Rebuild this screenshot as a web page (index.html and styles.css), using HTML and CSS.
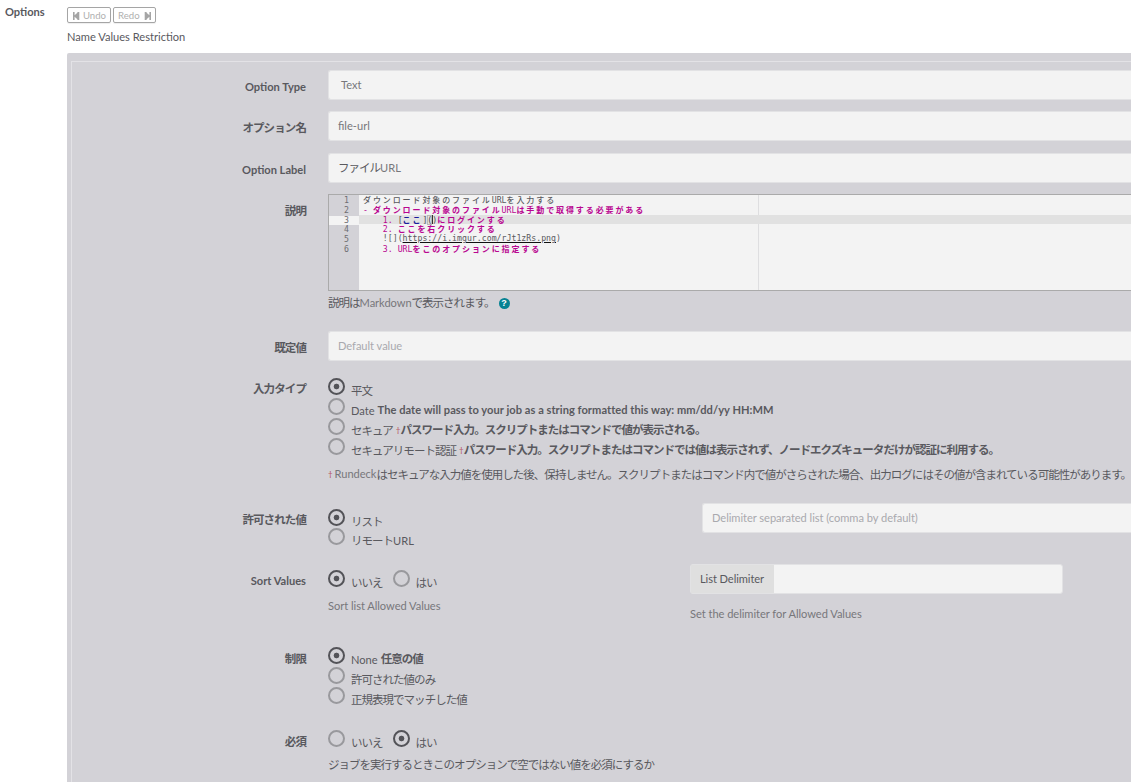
FILE: index.html
```html
<!DOCTYPE html>
<html lang="ja">
<head>
<meta charset="utf-8">
<title>Options</title>
<link rel="stylesheet" href="styles.css">
</head>
<body>
<div class="page">
  <div class="section-label">Options</div>
  <main class="section-body">
    <div class="toolbar">
      <button class="btn"><svg width="7" height="8" viewBox="0 0 7 8"><path d="M0 0h1.600v3.200L4.400 .800V0H6.300v8H4.400V7.200L1.600 4.800V8H0z"/></svg><span>Undo</span></button>
      <button class="btn redo"><span>Redo</span><svg width="7" height="8" viewBox="0 0 7 8"><path d="M7 0H5.400v3.200L2.600 .800V0H.700v8H2.600V7.200L5.400 4.800V8H7z"/></svg></button>
    </div>
    <div class="summary">Name Values Restriction</div>
    <div class="panel"><form class="option-form">
      <div class="row h41"><label class="label">Option Type</label><div class="input select">Text</div></div>
      <div class="row h42"><label class="label ja">オプション名</label><div class="input">file-url</div></div>
      <div class="row h41"><label class="label">Option Label</label><div class="input"><span class="ja">ファイル</span>URL</div></div>
      <div class="row h137"><label class="label ja">説明</label>
        <div>
          <div class="editor">
            <div class="gutter"><div>1</div><div>2</div><div class="active">3</div><div>4</div><div>5</div><div>6</div></div>
            <div class="code">
              <div><b class="j">ダウンロード対象のファイル</b>URL<b class="j">を入力する</b></div>
              <div class="list">- <b class="j">ダウンロード対象のファイル</b>URL<b class="j">は手動で取得する必要がある</b></div>
              <div class="list active">    1. <i>[</i><b class="j link">ここ</b><i>]<span class="bracket">(</span><span class="cursor"></span><span>)</span></i><b class="j">にログインする</b></div>
              <div class="list">    2. <b class="j">ここを右クリックする</b></div>
              <div>    ![](<u>https://i.imgur.com/rJt1zRs.png</u>)</div>
              <div class="list">    3. URL<b class="j">をこのオプションに指定する</b></div>
            </div>
          </div>
          <div class="help editor-help"><span class="ja">説明は</span><span>Markdown</span><span class="ja">で表示されます。</span><span class="question">?</span></div>
        </div>
      </div>
      <div class="row h47"><label class="label ja">既定値</label><div class="input placeholder">Default value</div></div>
      <div class="row h125"><label class="label ja raised">入力タイプ</label>
        <div>
          <div class="radio on"><i></i><span class="ja">平文</span></div>
          <div class="radio"><i></i><span>Date</span><strong class="date">The date will pass to your job as a string formatted this way: mm/dd/yy HH:MM</strong></div>
          <div class="radio"><i></i><span class="ja">セキュア</span><sup>†</sup><strong class="ja">パスワード入力。スクリプトまたはコマンドで値が表示される。</strong></div>
          <div class="radio"><i></i><span class="ja">セキュアリモート認証</span><sup>†</sup><strong class="ja">パスワード入力。スクリプトまたはコマンドでは値は表示されず、ノードエクズキュータだけが認証に利用する。</strong></div>
          <div class="help security"><sup>†</sup><span>Rundeck</span><span class="ja">はセキュアな入力値を使用した後、保持しません。スクリプトまたはコマンド内で値がさらされた場合、出力ログにはその値が含まれている可能性があります。</span></div>
        </div>
      </div>
      <div class="row h61"><label class="label ja">許可された値</label>
        <div class="split allowed">
          <div class="choices"><div class="radio on"><i></i><span class="ja">リスト</span></div><div class="radio"><i></i><span class="ja">リモート</span><span>URL</span></div></div>
          <div class="input placeholder">Delimiter separated list (comma by default)</div>
        </div>
      </div>
      <div class="row h84"><label class="label">Sort Values</label>
        <div class="split sort">
          <div><div class="inline"><div class="radio on"><i></i><span class="ja">いいえ</span></div><div class="radio"><i></i><span class="ja">はい</span></div></div><div class="help sort-help">Sort list Allowed Values</div></div>
          <div><div class="group"><span class="addon">List Delimiter</span><span class="field"></span></div><div class="help delim-help">Set the delimiter for Allowed Values</div></div>
        </div>
      </div>
      <div class="row h83"><label class="label ja raised">制限</label>
        <div class="restrictions">
          <div class="radio on"><i></i><span>None</span><strong class="ja">任意の値</strong></div>
          <div class="radio"><i></i><span class="ja">許可された値のみ</span></div>
          <div class="radio"><i></i><span class="ja">正規表現でマッチした値</span></div>
        </div>
      </div>
      <div class="row h60"><label class="label ja raised">必須</label>
        <div><div class="inline required"><div class="radio"><i></i><span class="ja">いいえ</span></div><div class="radio on"><i></i><span class="ja">はい</span></div></div><div class="help required-help ja">ジョブを実行するときこのオプションで空ではない値を必須にするか</div></div>
      </div>
    </form></div>
  </main>
</div>
</body>
</html>
```

FILE: styles.css
```css
* { box-sizing: border-box; }
body { margin: 0; height: 782px; overflow: hidden; background: #fff; color: #59595e; font: 11.1px/16px Lato, "Noto Sans CJK JP", sans-serif; white-space: nowrap; }
.page { display: grid; grid-template-columns: 67px 1fr; height: 782px; overflow: hidden; }
.section-label { padding: 4px 0 0 5px; font-weight: 700; }
.section-body { min-width: 0; padding-top: 7px; }
.toolbar { display: flex; gap: 2px; height: 16px; }
.btn { display: flex; align-items: center; justify-content: space-between; width: 44px; height: 16px; padding: 1px 4px 0 5px; border: 1px solid #a5a5a5; border-radius: 2px; background: #fff; color: #b0b0b0; font: 9.6px/12px Lato, sans-serif; box-shadow: 0 1px 1px #eee; }
.btn.redo { width: 43px; padding: 1px 4px 0; }
.btn svg { flex: none; fill: #a5a5a5; }
.summary { height: 30px; padding-top: 6px; }
.panel { height: 760px; padding: 8px 0 0 4px; background: #d3d2d7; border-radius: 2px 0 0; }
.option-form { height: 752px; padding-top: 8px; border: solid #e3e2e6; border-width: 1px 0 0 1px; }
.row { display: grid; grid-template-columns: 234px minmax(0, 1fr); column-gap: 22px; align-items: start; }
.h41 { height: 41px; } .h42 { height: 42px; } .h47 { height: 47px; } .h60 { height: 60px; } .h61 { height: 61px; }
.h83 { height: 83px; } .h84 { height: 84px; } .h125 { height: 125px; } .h137 { height: 137px; }
.label { padding-top: 9px; text-align: right; font-weight: 700; }
.ja { font-family: "Noto Sans CJK JP", sans-serif; font-size: 11.5px; letter-spacing: -.98px; }
.label.ja { padding-top: 8px; letter-spacing: -.9px; }
.label.raised { padding-top: 2px; }
.input { height: 30px; padding: 6px 9px; border: 1px solid #e2e2e4; border-right: 0; border-radius: 3px 0 0 3px; background: #f3f3f3; color: #77777b; }
.input .ja { display: inline-block; height: 16px; line-height: 14px; vertical-align: top; color: #59595e; }
.select { padding-left: 12px; }
.placeholder { color: #a9a9ae; letter-spacing: -.04px; }
.editor { display: flex; height: 97px; border: 1px solid #aaa; border-right: 0; background: #f3f3f3; font: 8.22px/9.75px "DejaVu Sans Mono", monospace; }
.gutter { width: 30px; padding-top: 1px; background: #d3d2d7; color: #6d6d72; }
.gutter div { height: 9.75px; padding-right: 10px; text-align: right; }
.gutter .active { background: #f3f3f3; }
.code { flex: 1; background: linear-gradient(90deg, transparent 399px, #dedee0 399px, #dedee0 400px, transparent 400px); }
.code > div { height: 9.75px; padding-left: 4px; white-space: pre; }
.code .active { background: #e1e1e1; }
.code i { font-style: normal; color: #49494e; }
.code .list { color: #b90690; }
.j { font: 500 8px/9px "Noto Sans CJK JP", sans-serif; letter-spacing: 1.9px; }
.code .list .j { font-weight: 700; }
.code .list .link { color: #1b1b9c; }
.code u { text-underline-offset: 1px; text-decoration-color: #111; }
.bracket { outline: 1px solid #b8b8b8; outline-offset: -1px; }
.cursor { display: inline-block; width: 1px; height: 9px; margin-right: -1px; background: #333; vertical-align: top; }
.help { color: #77777b; letter-spacing: -.04px; }
.help .ja, .help.ja { color: #59595e; letter-spacing: -.99px; }
.editor-help { display: flex; padding-top: 4px; }
.editor-help .ja { line-height: 14px; }
.question { width: 11px; height: 11px; margin: 3px 0 0 4px; border-radius: 50%; background: #078293; color: #fff; font: bold 9px/11px "Liberation Sans", sans-serif; text-align: center; }
.radio { display: flex; height: 20px; align-items: flex-start; }
.radio > i { flex: none; width: 17px; height: 17px; margin-right: 6px; border: 2px solid #99999d; border-radius: 50%; }
.radio.on > i { border-color: #535358; background: radial-gradient(circle, #535358 2.5px, transparent 3.2px); }
.radio > span { padding-top: 5px; }
.radio > span.ja { padding-top: 4px; }
.radio > strong { padding-top: 4px; margin-left: 3px; }
.radio > strong.ja { padding-top: 3px; }
.radio > .date { letter-spacing: .04px; }
sup { color: #b34a59; font-size: 8px; line-height: 16px; }
.radio sup { padding: 4px 0 0 3px; }
.radio sup + strong { margin-left: 0; }
.security { display: flex; padding-top: 8px; }
.security .ja { line-height: 16px; }
.security sup { margin-right: 2px; }
.split { display: grid; }
.allowed { grid-template-columns: 374px 1fr; }
.choices { padding-top: 6px; }
.choices .radio + .radio { margin-top: -1px; }
.sort { grid-template-columns: 362px 373px; }
.inline { display: flex; gap: 10px; padding-top: 6px; }
.inline.required { margin-top: -1px; padding-top: 0; }
.restrictions { margin-top: -1px; }
.sort-help { padding-top: 8px; }
.required-help { padding-top: 6px; }
.group { display: flex; height: 30px; border: 1px solid #e2e2e4; border-radius: 3px; background: #f3f3f3; }
.addon { width: 83px; padding: 6px 0 0 9px; background: #dfdfdf; letter-spacing: -.08px; }
.delim-help { padding-top: 12px; }
```
